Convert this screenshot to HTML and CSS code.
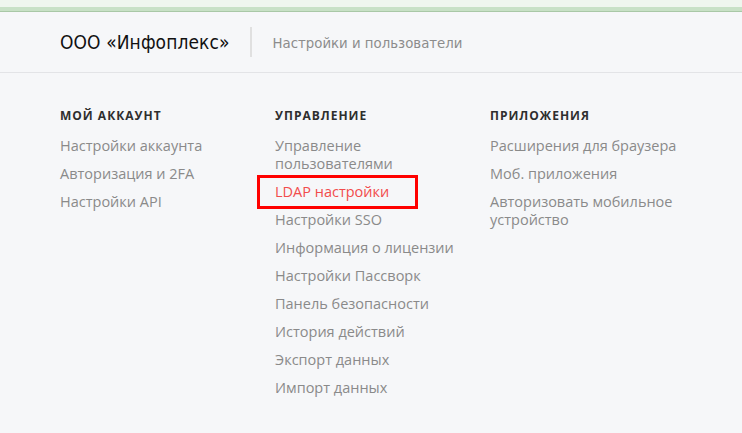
FILE: index.html
```html
<!DOCTYPE html>
<html lang="ru">
<head>
    <meta charset="UTF-8">
    <meta name="viewport" content="width=device-width, initial-scale=1.0">
    <title>Настройки и пользователи</title>
    <link rel="stylesheet" href="styles.css">
</head>
<body>
    <div class="topbar"></div>

    <header class="header">
        <span class="company">ООО «Инфоплекс»</span>
        <span class="divider"></span>
        <span class="subtitle">Настройки и пользователи</span>
    </header>

    <main class="menu">
        <section class="menu-col">
            <h3>Мой аккаунт</h3>
            <a href="#">Настройки аккаунта</a>
            <a href="#">Авторизация и 2FA</a>
            <a href="#">Настройки API</a>
        </section>
        <section class="menu-col">
            <h3>Управление</h3>
            <a href="#">Управление пользователями</a>
            <a href="#" class="active">LDAP настройки</a>
            <a href="#">Настройки SSO</a>
            <a href="#">Информация о лицензии</a>
            <a href="#">Настройки Пассворк</a>
            <a href="#">Панель безопасности</a>
            <a href="#">История действий</a>
            <a href="#">Экспорт данных</a>
            <a href="#">Импорт данных</a>
        </section>
        <section class="menu-col">
            <h3>Приложения</h3>
            <a href="#">Расширения для браузера</a>
            <a href="#">Моб. приложения</a>
            <a href="#">Авторизовать мобильное устройство</a>
        </section>
    </main>
</body>
</html>
```

FILE: styles.css
```css
html, body {
    margin: 0;
    padding: 0;
}
body {
    background: #f6f7f9;
    font-family: "Open Sans", "Noto Sans", sans-serif;
    color: #8a8a8a;
}

.topbar {
    height: 7px;
    background: #eff6ee;
    border-bottom: 4px solid #c8e1c6;
    box-shadow: 0 1px 0 #a9c8a7;
}

.header {
    display: flex;
    align-items: center;
    height: 60px;
    margin-top: 1px;
    padding-left: 60px;
    border-bottom: 1px solid #e3e4e7;
}
.company {
    font-family: "DejaVu Sans Condensed", "DejaVu Sans", sans-serif;
    font-stretch: condensed;
    font-size: 19px;
    letter-spacing: 0.1px;
    color: #111;
}
.divider {
    width: 2px;
    height: 30px;
    margin: 0 21px 0 20px;
    background: #e0e0e0;
}
.subtitle {
    font-family: "DejaVu Sans Condensed", "DejaVu Sans", sans-serif;
    font-stretch: condensed;
    font-size: 14.8px;
    color: #8c8c8c;
}

.menu {
    display: flex;
    padding: 35px 0 0 60px;
}
.menu-col {
    display: flex;
    flex-direction: column;
    align-items: flex-start;
    width: 215px;
    gap: 10px;
}
.menu-col h3 {
    margin: 0 0 3px;
    font-size: 12px;
    font-weight: 700;
    letter-spacing: 1px;
    text-transform: uppercase;
    color: #2e2e2e;
    line-height: 16px;
}
.menu-col a {
    max-width: 192px;
    font-size: 14.5px;
    line-height: 18px;
    color: #8a8a8a;
    text-decoration: none;
}
.menu-col a.active {
    color: #f24c4c;
    outline: 3px solid #f00;
    padding: 5px 26px 5px 15px;
    margin: -5px 0 -5px -15px;
}
```
